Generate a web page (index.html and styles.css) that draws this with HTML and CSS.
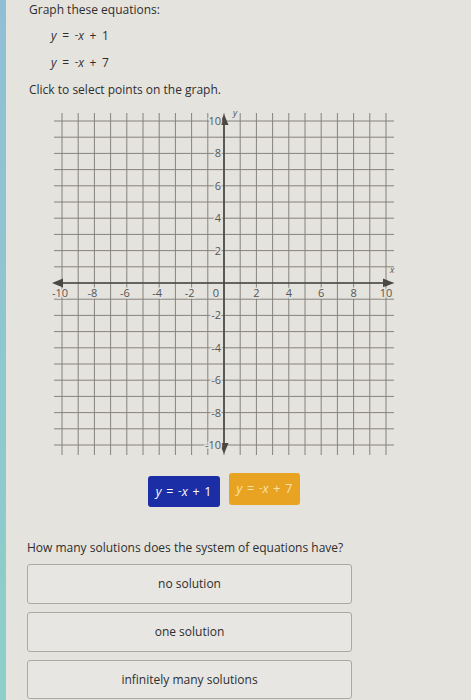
FILE: index.html
```html
<!DOCTYPE html>
<html lang="en">
<head>
    <meta charset="UTF-8">
    <meta name="viewport" content="width=device-width, initial-scale=1.0">
    <title>Graph these equations</title>
    <link rel="stylesheet" href="styles.css">
</head>
<body>
<div id="page">
    <div id="side-strip"></div>
    <div id="content">
        <div class="prompt">Graph these equations:</div>
        <div class="equations">
            <div><i>y</i> = <span class="neg">-</span><i>x</i> + 1</div>
            <div><i>y</i> = <span class="neg">-</span><i>x</i> + 7</div>
        </div>
        <div class="prompt">Click to select points on the graph.</div>

        <div id="graph-panel">
            <svg id="graph" width="360" height="360" viewBox="0 0 360 360"></svg>
            <div id="line-tabs">
                <button class="tab tab-blue"><i>y</i> = <span class="neg">-</span><i>x</i> + 1</button>
                <button class="tab tab-orange"><i>y</i> = <span class="neg">-</span><i>x</i> + 7</button>
            </div>
        </div>

        <div class="question">How many solutions does the system of equations have?</div>
        <div id="choices">
            <button class="choice">no solution</button>
            <button class="choice">one solution</button>
            <button class="choice">infinitely many solutions</button>
        </div>
    </div>
</div>

<script>
    const NS = "http://www.w3.org/2000/svg";
    const svg = document.getElementById("graph");
    const unit = 16.2;
    const cx = 180, cy = 180;

    function add(tag, attrs, text) {
        const el = document.createElementNS(NS, tag);
        for (const k in attrs) el.setAttribute(k, attrs[k]);
        if (text !== undefined) el.textContent = text;
        svg.appendChild(el);
        return el;
    }

    // grid runs half a unit past +-10 on every side
    for (let i = -10; i <= 10; i++) {
        const x = cx + i * unit;
        const y = cy - i * unit;
        add("line", { x1: x, y1: 10, x2: x, y2: 352, class: "grid-line" });
        add("line", { x1: 10, y1: y, x2: 350, y2: y, class: "grid-line" });
    }

    // axes with arrow heads
    add("line", { x1: 14, y1: cy, x2: 344, y2: cy, class: "axis" });
    add("line", { x1: cx, y1: 16, x2: cx, y2: 346, class: "axis" });
    add("polygon", { points: "8,180 19,175.5 19,184.5", class: "arrow" });
    add("polygon", { points: "350,180 339,175.5 339,184.5", class: "arrow" });
    add("polygon", { points: "180,11 175.5,22 184.5,22", class: "arrow" });
    add("polygon", { points: "180,351 175.5,340 184.5,340", class: "arrow" });

    add("text", { x: 189, y: 13, class: "axis-name" }, "y");
    add("text", { x: 346, y: 170, class: "axis-name" }, "x");

    for (let i = -10; i <= 10; i += 2) {
        if (i === 0) continue;
        const nudge = i < 0 ? -2 : 0;
        add("text", { x: cx + i * unit + nudge, y: 194, class: "tick", "text-anchor": "middle" }, String(i));
        add("text", { x: 177, y: cy - i * unit + 4, class: "tick", "text-anchor": "end" }, String(i));
    }
    add("text", { x: 172, y: 194, class: "tick", "text-anchor": "middle" }, "0");
</script>
</body>
</html>
```

FILE: styles.css
```css
body {
    margin: 0;
    font-family: "Open Sans", Arial, sans-serif;
    background-color: #e5e3de;
    color: #2e2e2e;
}

#page {
    display: flex;
    min-height: 700px;
}

#side-strip {
    width: 6px;
    flex-shrink: 0;
    background: linear-gradient(#8fbfd5, #8ecfc9);
}

#content {
    flex: 1;
    padding-left: 23px;
}

.prompt {
    font-size: 12px;
    line-height: 27px;
}

.prompt:first-child {
    line-height: 20px;
    margin-bottom: 1.5px;
}

.equations {
    margin-left: 22px;
    font-size: 12px;
    line-height: 27px;
    word-spacing: 2.5px;
}

.neg {
    display: inline-block;
    font-size: 0.9em;
    transform: translateY(-2px);
    word-spacing: 0;
}

#graph-panel {
    width: 360px;
    margin-left: 15px;
}

#graph {
    display: block;
}

.grid-line {
    stroke: #86827c;
    stroke-width: 1;
}

.axis {
    stroke: #4a4845;
    stroke-width: 1.7;
}

.arrow {
    fill: #4a4845;
}

.tick {
    font-family: "Open Sans", Arial, sans-serif;
    font-size: 11px;
    fill: #555;
    stroke: #e5e3de;
    stroke-width: 3px;
    paint-order: stroke;
}

.axis-name {
    font-family: "Open Sans", Arial, sans-serif;
    font-size: 9px;
    font-style: italic;
    fill: #555;
}

#line-tabs {
    display: flex;
    justify-content: center;
    align-items: flex-start;
    gap: 9px;
    margin-top: 10px;
}

.tab {
    height: 32px;
    padding: 0 8px;
    border: none;
    border-radius: 3px;
    font-family: "Open Sans", Arial, sans-serif;
    font-size: 12.5px;
    word-spacing: 1.5px;
    white-space: nowrap;
    cursor: pointer;
}

.tab-blue {
    height: 31px;
    background-color: #1b2ea6;
    color: #fff;
    margin-top: 3px;
}

.tab-orange {
    background-color: #e8a323;
    color: #f8e3a6;
}

.question {
    margin-top: 31px;
    margin-left: -2px;
    font-size: 12px;
    line-height: 20px;
}

#choices {
    display: flex;
    flex-direction: column;
    gap: 8px;
    width: 325px;
    margin-top: 6px;
    margin-left: -2px;
}

.choice {
    height: 40px;
    background-color: #e7e6e2;
    border: 1.5px solid #aaa9a6;
    border-radius: 3px;
    font-family: "Open Sans", Arial, sans-serif;
    font-size: 12px;
    color: #2e2e2e;
    cursor: pointer;
}

.choice + .choice + .choice {
    height: 39px;
}
```
